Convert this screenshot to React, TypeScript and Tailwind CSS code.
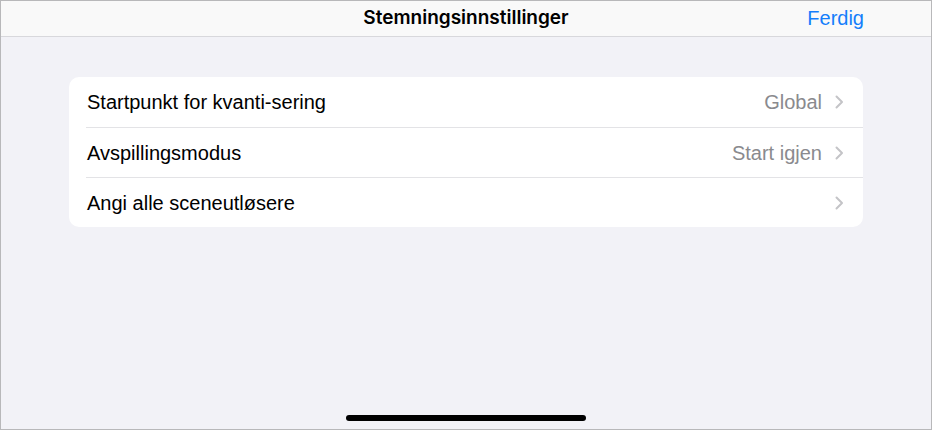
import React from 'react';

const rows = [
  { label: 'Startpunkt for kvanti-sering', value: 'Global' },
  { label: 'Avspillingsmodus', value: 'Start igjen' },
  { label: 'Angi alle sceneutløsere', value: '' },
];

const Chevron: React.FC = () => (
  <svg width="9" height="14" viewBox="0 0 9 14" className="shrink-0">
    <path d="M1.5 1.5 L7 7 L1.5 12.5" fill="none" stroke="#c4c4c7" strokeWidth="2" strokeLinecap="round" strokeLinejoin="round" />
  </svg>
);

const App: React.FC = () => {
  return (
    <div className="w-[932px] h-[430px] border border-[#b8b8ba] bg-[#f2f2f7] flex flex-col font-['Liberation_Sans',Arial,sans-serif]">
      {/* Nav bar */}
      <div className="relative h-[36px] shrink-0 bg-[#f9f9f9] border-b border-[#d8d8dc] flex items-center justify-center">
        <span className="font-['Inter',sans-serif] text-[19px] font-semibold text-black">Stemningsinnstillinger</span>
        <button className="absolute right-[67px] top-[5px] text-[20px] leading-[24px] text-[#147efb]">Ferdig</button>
      </div>

      {/* Settings group */}
      <div className="px-[68px] mt-[40px]">
        <div className="bg-white rounded-[10px] overflow-hidden">
          {rows.map((row, i) => (
            <div key={row.label} className="h-[50px] flex flex-col">
              {i > 0 && <div className="ml-[17px] h-px bg-[#e3e3e6]" />}
              <div className="flex-1 flex items-center pl-[18px] pr-[19px]">
                <span className="flex-1 text-[20px] text-black">{row.label}</span>
                {row.value && <span className="text-[20px] text-[#8a8a8e] mr-[13px]">{row.value}</span>}
                <Chevron />
              </div>
            </div>
          ))}
        </div>
      </div>

      {/* Home indicator */}
      <div className="mt-auto mb-[8px] flex justify-center">
        <div className="w-[240px] h-[6px] rounded-full bg-black" />
      </div>
    </div>
  );
};

export default App;
